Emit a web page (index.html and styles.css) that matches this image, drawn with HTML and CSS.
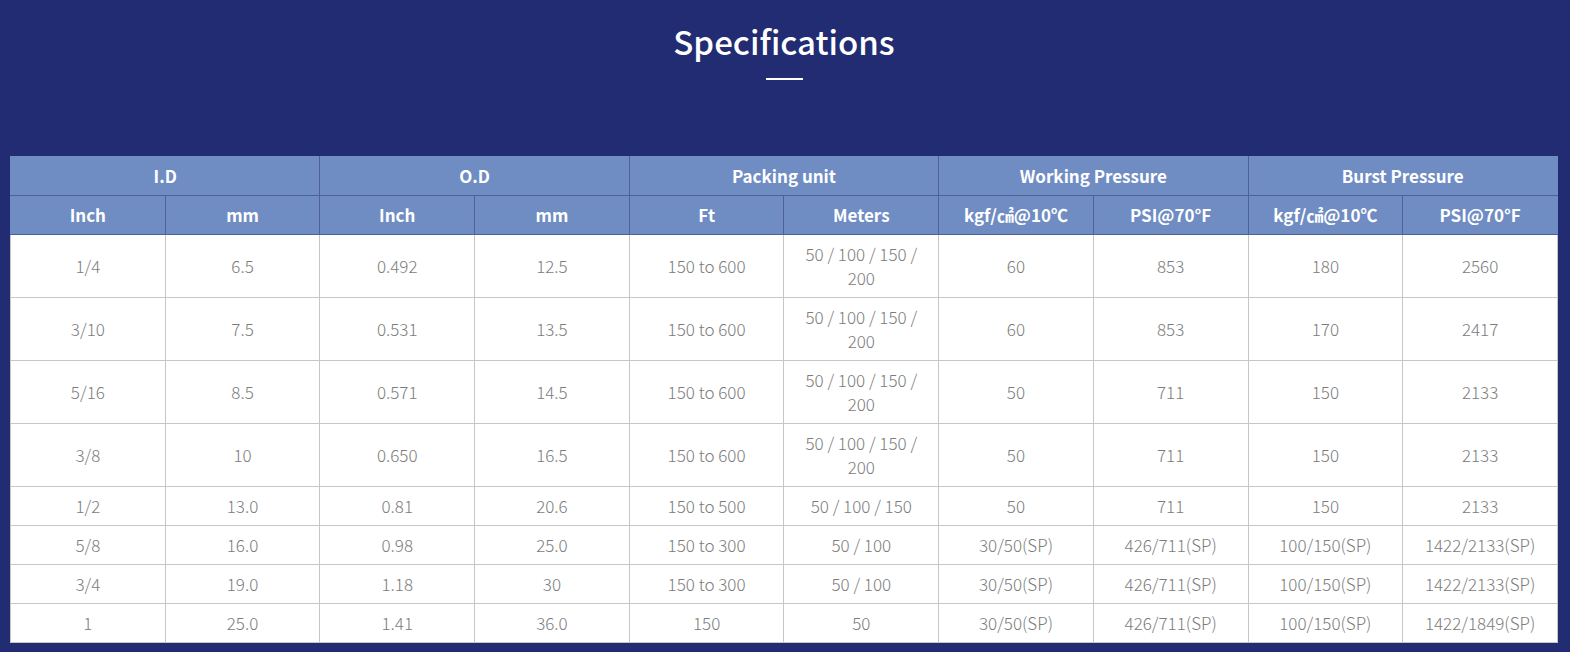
FILE: index.html
```html
<!DOCTYPE html>
<html lang="en">
<head>
<meta charset="utf-8">
<title>Specifications</title>
<link rel="stylesheet" href="styles.css">
</head>
<body>
<section class="spec">
  <h2 class="spec-title">Specifications</h2>
  <div class="spec-bar"></div>
  <table class="spec-table">
    <thead>
      <tr>
        <th colspan="2">I.D</th>
        <th colspan="2">O.D</th>
        <th colspan="2">Packing unit</th>
        <th colspan="2">Working Pressure</th>
        <th colspan="2">Burst Pressure</th>
      </tr>
      <tr>
        <th>Inch</th><th>mm</th>
        <th>Inch</th><th>mm</th>
        <th>Ft</th><th>Meters</th>
        <th>kgf/㎠@10℃</th><th>PSI@70°F</th>
        <th>kgf/㎠@10℃</th><th>PSI@70°F</th>
      </tr>
    </thead>
    <tbody>
      <tr><td>1/4</td><td>6.5</td><td>0.492</td><td>12.5</td><td>150 to 600</td><td>50 / 100 / 150 / 200</td><td>60</td><td>853</td><td>180</td><td>2560</td></tr>
      <tr><td>3/10</td><td>7.5</td><td>0.531</td><td>13.5</td><td>150 to 600</td><td>50 / 100 / 150 / 200</td><td>60</td><td>853</td><td>170</td><td>2417</td></tr>
      <tr><td>5/16</td><td>8.5</td><td>0.571</td><td>14.5</td><td>150 to 600</td><td>50 / 100 / 150 / 200</td><td>50</td><td>711</td><td>150</td><td>2133</td></tr>
      <tr><td>3/8</td><td>10</td><td>0.650</td><td>16.5</td><td>150 to 600</td><td>50 / 100 / 150 / 200</td><td>50</td><td>711</td><td>150</td><td>2133</td></tr>
      <tr><td>1/2</td><td>13.0</td><td>0.81</td><td>20.6</td><td>150 to 500</td><td>50 / 100 / 150</td><td>50</td><td>711</td><td>150</td><td>2133</td></tr>
      <tr><td>5/8</td><td>16.0</td><td>0.98</td><td>25.0</td><td>150 to 300</td><td>50 / 100</td><td>30/50(SP)</td><td>426/711(SP)</td><td>100/150(SP)</td><td>1422/2133(SP)</td></tr>
      <tr><td>3/4</td><td>19.0</td><td>1.18</td><td>30</td><td>150 to 300</td><td>50 / 100</td><td>30/50(SP)</td><td>426/711(SP)</td><td>100/150(SP)</td><td>1422/2133(SP)</td></tr>
      <tr><td>1</td><td>25.0</td><td>1.41</td><td>36.0</td><td>150</td><td>50</td><td>30/50(SP)</td><td>426/711(SP)</td><td>100/150(SP)</td><td>1422/1849(SP)</td></tr>
    </tbody>
  </table>
</section>
</body>
</html>
```

FILE: styles.css
```css
html, body {
  margin: 0;
  padding: 0;
  background: #212c72;
}

body {
  font-family: "Noto Sans CJK KR", "Noto Sans", sans-serif;
  height: 652px;
  overflow: hidden;
}

.spec {
  padding: 17px 12px 0 10px;
  display: flex;
  flex-direction: column;
  align-items: center;
}

.spec-title {
  margin: 0;
  color: #ffffff;
  font-size: 33px;
  font-weight: 500;
  line-height: 48px;
}

.spec-bar {
  width: 37px;
  height: 2px;
  background: #ffffff;
  margin-top: 13px;
}

.spec-table {
  margin-top: 76px;
  width: 1548px;
  border-collapse: collapse;
  table-layout: fixed;
  background: #ffffff;
  font-size: 17px;
  line-height: 24px;
  text-align: center;
}

.spec-table th {
  background: #6f8dc3;
  color: #ffffff;
  font-weight: 700;
  padding: 7px 6px;
  border: 1px solid #4f6297;
}

.spec-table thead tr:first-child th {
  border-top-color: #6f8dc3;
}

.spec-table th:first-child {
  border-left-color: #6f8dc3;
}

.spec-table th:last-child {
  border-right-color: #6f8dc3;
}

.spec-table td {
  color: #7c7c7c;
  font-weight: 300;
  padding: 7px 10px;
  border: 1px solid #c6c6c6;
  word-wrap: break-word;
}

.spec-table tbody tr:first-child td {
  border-top: 1px solid #c6c6c6;
}
```
